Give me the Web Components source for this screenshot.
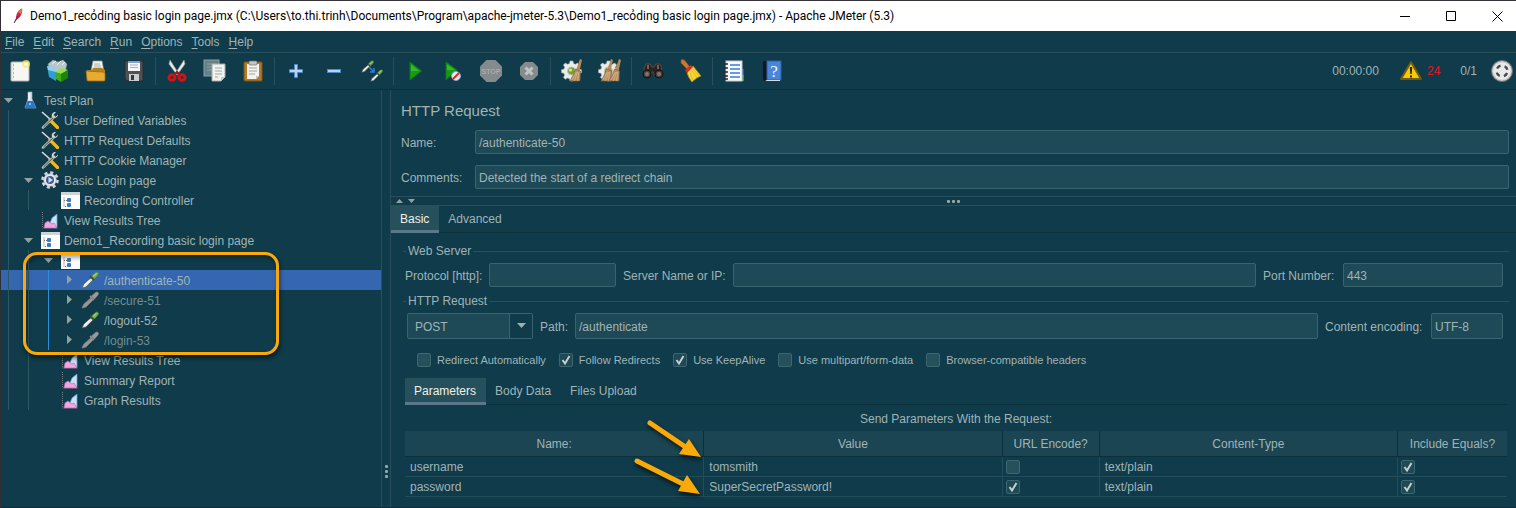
<!DOCTYPE html>
<html lang="en">
<head>
<meta charset="utf-8">
<title>Apache JMeter (5.3)</title>
<style>
:root{
  --bg:#0f3b4a; --field:#1e4956; --field-line:#3a646d; --line:#284f5b; --dark:#0b303c;
  --text:#a0b4b5; --bright:#eef0e4; --tab:#27505d; --accent:#59788a; --head:#1b4552; --mark:#f9aa0a;
}
html,body{margin:0;height:100%}
body{background:var(--bg);color:var(--text);font:12px/16px "Liberation Sans",Arial,sans-serif}
</style>
</head>
<body>
<jm-app></jm-app>
<script>
const define = (name, css, html, setup) => {
  const tpl = document.createElement('template');
  customElements.define(name, class extends HTMLElement {
    constructor(){
      super();
      this.attachShadow({mode:'open'});
    }
    connectedCallback(){
      if (this.shadowRoot.childNodes.length) return;
      tpl.innerHTML = `<style>*{box-sizing:border-box}${css}</style>` + (typeof html === 'function' ? html(this) : html);
      this.shadowRoot.append(tpl.content.cloneNode(true));
      if (setup) setup(this);
    }
  });
};

const dropper = (x, y, s, off) => `<g transform="translate(${x} ${y}) scale(${s})">
  <path d="M1 17 3 13 11 6l2 2-8 8z" fill="${off ? '#969696' : '#d9ddd8'}" stroke="${off ? '#8a8a8a' : '#53605e'}" stroke-width=".7"/>
  ${off ? '' : '<path d="M3 15 9 9" stroke="#fff" stroke-width="1.2"/>'}
  <path d="m9 5 4 4" stroke="${off ? '#8a8a8a' : '#3a4a3e'}" stroke-width="1.8"/>
  <path d="m10.500 5 4-3.500c2-1.500 4 .5 2.500 2.500L13.500 8z" fill="${off ? '#9a9a9a' : '#74b14e'}" stroke="${off ? '#888' : '#4c8238'}" stroke-width=".6"/>
  ${off ? '' : '<path d="m12 5.500 3.500-3" stroke="#b4e08c" stroke-width="1"/>'}</g>`;

const gear = `<g fill="#e9ece9" stroke="#aab1b0" stroke-width=".6"><path d="M9 1h3l.5 2.500 2 .8L16.600 3l2 2-1.300 2.200.8 2 2.400.5v3l-2.400.5-.8 2 1.300 2.100-2 2-2.100-1.300-2 .8L12 21H9l-.5-2.200-2-.8-2.100 1.300-2-2 1.300-2.100-.8-2L.5 12.700v-3l2.400-.5.8-2L2.400 5l2-2 2.100 1.300 2-.8z"/></g><circle cx="10.500" cy="11" r="4" fill="#7ba32c" stroke="#bcc3ba"/><circle cx="9.500" cy="10" r="1.500" fill="#d2eb8a"/>`;
const brush = x => `<g transform="translate(${x} 0)"><path d="M10 0 12 1 9.500 12 6 11z" fill="#b98a55"/><path d="m5.500 10 5 2-.5 10H0c2-4 4-7 5.500-12z" fill="#b38e63" stroke="#7c5a36" stroke-width=".6"/><path d="M2 21 6.500 13M4.500 22l3-9M7.500 22l1.300-9" stroke="#e0bf91" stroke-width=".7"/></g>`;

const ICONS = {
  feather:[10,16,`<path d="M1 15 3 10C3 6 6 1 9 .5 10 5 7 10 3.500 12z" fill="#c9234b"/><path d="M5.500 5C6 3 7 1 9 .5c.7 2-.3 4-1 5z" fill="#ec7a2f"/><path d="M1 15 5 8" stroke="#6b2a5e" stroke-width="1"/>`],
  new:[24,24,`<rect x="3" y="3" width="18" height="19" rx="1" fill="#f6f6f3" stroke="#b4b6b3"/><path d="M5 3v19" stroke="#ddd"/><path d="M5 6h1M5 10h1M5 14h1M5 18h1" stroke="#888"/><circle cx="18" cy="5" r="4" fill="#f4ea6c" opacity=".75"/><circle cx="18" cy="5" r="1.800" fill="#fffbe0"/>`],
  templates:[24,24,`<path d="M2 5 7 1l5 2 5-2 4 4-2 8H4z" fill="#b9c6ca" stroke="#7f9094" stroke-width=".6"/><path d="m6 5 4-3M11 6l4-4M16 6l3-3" stroke="#eef" stroke-width="1"/><path d="m1 7 9 3v12l-7-4z" fill="#2f9ed6"/><path d="M1 7 10 9v4L2 11z" fill="#8ed1f0"/><path d="m9 13 6 2v8l-5-3z" fill="#3cae16"/><path d="m9 13 7-4 6 2-7 4z" fill="#93e14c"/><path d="m15 15 7-4v8l-7 4z" fill="#1d8508"/>`],
  open:[24,24,`<path d="M7 12 9 2h9l2 11z" fill="#f5f5f2" stroke="#999" stroke-width=".7"/><path d="M10 5h6M10 7h7M9.500 9h8" stroke="#aaa"/><path d="M3 11h5l1-2h9l3 2v9H3z" fill="#b8801a"/><path d="m2 12 16 1c2 0 3 1 3 2v6c0 1-1 1-2 1H4c-1 0-1-1-1-1z" fill="#e6ab31" stroke="#9a6c17" stroke-width=".8"/>`],
  save:[24,24,`<path d="M3 2h18v20H5l-2-2z" fill="#4d5055" stroke="#282b2e"/><rect x="6" y="2" width="12" height="10" fill="#f4f6f8"/><rect x="6" y="2" width="12" height="2" fill="#7ca1cb"/><path d="M8 6h8M8 8.500h8" stroke="#9db2c6"/><rect x="7" y="15" width="10" height="7" fill="#c9ccce"/><rect x="9" y="16" width="3" height="5" fill="#34373b"/>`],
  cut:[24,24,`<path d="m5 1 9 14-2 1L4 5zM19 1l-9 14 2 1L20 5z" fill="#eceeec" stroke="#8e9391" stroke-width=".7"/><g fill="none" stroke="#d41414" stroke-width="3"><ellipse cx="7" cy="18.500" rx="3" ry="2.800"/><ellipse cx="17" cy="18.500" rx="3" ry="2.800"/></g><path d="m9 16 3-3 3 3" stroke="#b30d0d" stroke-width="2" fill="none"/>`],
  copy:[24,24,`<rect x="1" y="1" width="15" height="16" fill="#668087" stroke="#8ca1a5"/><path d="M4 5h9M4 8h9M4 11h9" stroke="#8fa3a6"/><path d="M9 5h13v13l-4 4H9z" fill="#f2f3f0" stroke="#a6aaa7"/><path d="M12 9h7M12 12h7M12 15h7M12 18h3" stroke="#a4a8a6"/><path d="M18 22v-4h4" fill="#c5c8c5"/>`],
  paste:[24,24,`<rect x="3" y="3" width="18" height="19" rx="1" fill="#b47a2c" stroke="#805215"/><path d="M6 5h12v12l-3 3H6z" fill="#f3f3ef"/><path d="M8 9h8M8 12h8M8 15h6" stroke="#a2a5a3"/><rect x="8" y="2" width="8" height="4" rx="1" fill="#c4c7c4" stroke="#6c706d" stroke-width=".7"/><path d="M15 20v-3h3" fill="#c6c6c0"/>`],
  plus:[24,24,`<path d="M10.500 5.500h3v5h5v3h-5v5h-3v-5h-5v-3h5z" fill="#b9d3f3" stroke="#4f88cf"/>`],
  minus:[24,24,`<rect x="5.500" y="10.500" width="13" height="3" fill="#b9d3f3" stroke="#4f88cf"/>`],
  toggle:[24,24,dropper(1,1,.72) + dropper(10,10,.72) + `<path d="m9 8 5 5M14 9v4h-4" fill="none" stroke="#2f7de0" stroke-width="1.500"/>`],
  start:[24,24,`<path d="M7 3 18.500 12 7 21z" fill="#169a1a" stroke="#0b7b13"/><path d="M8 5.500 16 12H8z" fill="#4cc23e" opacity=".7"/>`],
  nopause:[24,24,`<path d="M5 3 16 11 5 21z" fill="#169a1a" stroke="#0b7b13"/><path d="M6 5.500 14 11H6z" fill="#4cc23e" opacity=".7"/><circle cx="15" cy="17" r="4.500" fill="#e6eaf5" stroke="#8a9bc7"/><path d="m12 20 6-6" stroke="#d42c25" stroke-width="2"/>`],
  stop:[24,24,`<path d="M7.500 1h9L23 7.500v9L16.500 23h-9L1 16.500v-9z" fill="#858a8c"/><text x="12" y="15" text-anchor="middle" font-family="Liberation Sans" font-size="7" font-weight="700" fill="#a7abac">STOP</text>`],
  shutdown:[24,24,`<path d="M8 3h8l5 5v8l-5 5H8l-5-5V8z" fill="#858a8c"/><path d="m8.500 8.500 7 7m0-7-7 7" stroke="#c0c4c5" stroke-width="3"/>`],
  clear:[24,24,`<g transform="translate(1 1)">${gear}</g>${brush(10)}`],
  clearall:[24,24,`<g transform="translate(0 1)">${gear}</g>${brush(3)}${brush(11)}`],
  search:[24,24,`<path d="M3 9 5 5h4l2 3h2l2-3h4l2 4-3 7h-4l-2-3h-2l-2 3H4z" fill="#2b2422" stroke="#5b4a40"/><circle cx="6" cy="15" r="4" fill="#463e3a" stroke="#141110"/><circle cx="18" cy="15" r="4" fill="#463e3a" stroke="#141110"/><circle cx="6" cy="15" r="2" fill="#8b7466"/><circle cx="18" cy="15" r="2" fill="#8b7466"/><path d="M7 6v4M17 6v4" stroke="#b59b86"/>`],
  broom:[24,24,`<path d="M2 1c2-1 4 0 5 2l4 5-3 2-6-6z" fill="#c67a35" stroke="#8b4d1a" stroke-width=".7"/><path d="m8 13 6-6 8 10c-3 1-6 3-9 6-2-3-4-5-5-10z" fill="#f7d63c" stroke="#ae8718" stroke-width=".8"/><path d="m11 14 3 7M13 12l5 7M14 10l6 7" stroke="#d3a920" stroke-width=".7"/><path d="m6 11 5.500-5L14 8l-6 6z" fill="#d92b26"/>`],
  functions:[24,24,`<rect x="15" y="10" width="7" height="6" fill="#2d5fb3"/><rect x="15" y="16" width="7" height="6" fill="#3aa534"/><rect x="4" y="2" width="16" height="20" fill="#fafbfd" stroke="#c5ccd5"/><path d="M8 6h10M8 10h10M8 14h10M8 18h10" stroke="#3b7bdd" stroke-width="1.500"/><path d="M2 5h4M2 9h4M2 13h4M2 17h4M2 20h4" stroke="#252b31" stroke-width="1.300"/>`],
  help:[24,24,`<path d="M3 2h5v20H4l-1-2z" fill="#101820"/><rect x="7" y="2" width="14" height="19" fill="#4a86d8" stroke="#2b5ea9"/><path d="M5 22h15v-1H7" fill="#d8dde2"/><text x="14" y="18" text-anchor="middle" font-family="Liberation Serif" font-size="17" fill="#eef4ff">?</text>`],
  warn:[24,24,`<path d="M12 3 22 20H2z" fill="#f5ca00" stroke="#6d5c10" stroke-width="2" stroke-linejoin="round"/><path d="M10.800 8h2.400l-.5 7h-1.400zM11 16.500h2v2h-2z" fill="#2a2400"/>`],
  status:[24,24,`<circle cx="12" cy="12" r="10.500" fill="#c9c9c9" stroke="#6f7474"/><circle cx="12" cy="12" r="8.800" fill="#e9e9e9"/><circle cx="12" cy="12" r="5.500" fill="none" stroke="#454848" stroke-width="2.400" stroke-dasharray="4.320" stroke-dashoffset="-2.160"/>`],
  flask:[18,18,`<path d="M7 1h4v7l4 9H4l3-9z" fill="#d7e2ea" stroke="#93a9b5" stroke-width=".7"/><path d="M6.500 10h5.500l3 7H4z" fill="#2877d0"/><path d="M8 2v7" stroke="#fff" stroke-width="1.200"/><circle cx="9" cy="13" r="1" fill="#9fd1ff"/>`],
  tools:[18,18,`<path d="M1 1 10 9" stroke="#d6d8d6" stroke-width="1.600"/><path d="m9 9 7.500 7.500" stroke="#efbb1c" stroke-width="3.200" stroke-linecap="round"/><path d="M2 16.500 13 6" stroke="#aeb4b2" stroke-width="2.600" stroke-linecap="round"/><path d="m2.500 16 10.500-10" stroke="#2c3434" stroke-width=".7"/><path d="M17 3.500 14.500 6 12.500 4 15 1c-3-.5-5 2-4 5 2 2 6 1 6-2.500z" fill="#cfd3d1"/>`],
  gear:[18,18,`<circle cx="9" cy="9" r="7.300" fill="none" stroke="#d4d8da" stroke-width="3" stroke-dasharray="3 2.730"/><circle cx="9" cy="9" r="6.300" fill="#e6e8ea" stroke="#aab1b7" stroke-width=".6"/><circle cx="9" cy="9" r="4" fill="#3b5a92"/><path d="M7.500 6 12 9l-4.500 3z" fill="#cfe0fb"/>`],
  controller:[19,18,`<rect width="19" height="17" y="1" fill="#fbfcfc"/><rect y="1" width="19" height="3" fill="#cdd3d5"/><path d="M3 6.500v9h3M3 9.500h3" fill="none" stroke="#777" stroke-dasharray="1 1"/><rect x="6" y="7" width="4" height="4" rx="1" fill="#3b7ac0"/><rect x="6" y="12" width="4" height="4" rx="1" fill="#3b7ac0"/>`],
  report:[18,18,`<path d="M1.500 1v16H17" fill="none" stroke="#6d7d83" stroke-dasharray="1 1"/><path d="m9 12 2-5 5-4v13H9z" fill="#c7e1f7" stroke="#6f9fd0" stroke-width=".7"/><path d="m3 17 1-5 3-2 4 3 2-1 3 5z" fill="#f1a6e0" stroke="#c565b1" stroke-width=".7"/>`],
  sampler:[19,18,dropper(0,0,1)],
  sampleroff:[19,18,dropper(0,0,1,true)],
};

define('jm-icon', `:host{display:block;flex:none;line-height:0}svg{display:block}`, el => {
  const [w, h, body] = ICONS[el.getAttribute('name')];
  return `<svg width="${w}" height="${h}" viewBox="0 0 ${w} ${h}" fill="none" aria-hidden="true">${body}</svg>`;
});

define('jm-title-bar', `
  :host{display:flex;align-items:center;height:31px;padding:0 0 0 12px;gap:7px;background:#fff;color:#000;border-top:1px solid #35323a;font:12px/16px Roboto,"Open Sans",sans-serif}
  .t{flex:1;white-space:nowrap;overflow:hidden}
  button{width:46px;height:30px;padding:0;border:0;background:none;display:grid;place-items:center}
  nav{display:flex;margin-right:-4px}`,
  `<jm-icon name="feather"></jm-icon><span class="t"><slot></slot></span>
  <nav aria-label="Window">
  <button aria-label="Minimize"><svg width="11" height="11"><path d="M0 5.500h10" stroke="#000"/></svg></button>
  <button aria-label="Maximize"><svg width="11" height="11"><path d="M.5.5h9v9h-9z" fill="none" stroke="#000"/></svg></button>
  <button aria-label="Close"><svg width="11" height="11"><path d="m.5.5 10 10m0-10-10 10" stroke="#000"/></svg></button></nav>`);

define('jm-menu-bar', `
  :host{display:flex;height:22px;gap:9px;padding:0 4px;align-items:center;border-bottom:1px solid var(--line)}
  button{font:inherit;color:inherit;background:none;border:0;padding:0}
  u{text-underline-offset:2px}`,
  ['File','Edit','Search','Run','Options','Tools','Help'].map(n => `<button><u>${n[0]}</u>${n.slice(1)}</button>`).join(''));

const groups = [
  [['new','New'],['templates','Templates'],['open','Open'],['save','Save']],
  [['cut','Cut'],['copy','Copy'],['paste','Paste']],
  [['plus','Expand all'],['minus','Collapse all'],['toggle','Toggle']],
  [['start','Start'],['nopause','Start no pauses'],['stop','Stop'],['shutdown','Shutdown']],
  [['clear','Clear'],['clearall','Clear all']],
  [['search','Search'],['broom','Reset search']],
  [['functions','Function helper'],['help','Help']]];
define('jm-tool-bar', `
  :host{display:flex;align-items:center;height:37px;border-bottom:1px solid var(--dark)}
  .g{display:flex}
  .g+.g{margin-left:2px;border-left:1px solid var(--line);padding-left:2px}
  button{width:38px;height:28px;padding:0;border:0;background:none;display:grid;place-items:center}
  .s{margin-left:auto;display:flex;align-items:center;padding-right:2px}
  .s button{width:24px}
  time{margin-right:20px}.n{color:#e3161f;margin:0 20px 0 4px}.r{margin-right:13px}`,
  groups.map(g => `<div class="g">${g.map(([i,t]) => `<button aria-label="${t}"><jm-icon name="${i}"></jm-icon></button>`).join('')}</div>`).join('') +
  `<div class="s"><time>00:00:00</time><button aria-label="Log"><jm-icon name="warn"></jm-icon></button><span class="n">24</span><span class="r">0/1</span><jm-icon name="status"></jm-icon></div>`);

define('jm-tree-row', `
  :host{display:flex;height:20px;align-items:center;white-space:nowrap}
  :host([selected]){background:#3567b0}
  :host([off]){color:#738d91}
  i{width:20px;height:20px;flex:none;padding-left:7px}
  i::before{content:"";display:block;width:1px;height:20px;background:#315660}
  i.b::before{background:#2b8ddb}
  .t{width:20px;flex:none;display:grid;justify-items:start;padding-left:3px}
  .i{width:18px;margin-right:5px;flex:none}
  .l{padding-top:2px}`,
  el => [...(el.getAttribute('guides') || '')].map(c => `<i class="${c}"></i>`).join('') +
  `<span class="t">${{
    open:'<svg width="10" height="10"><path d="M0 3h9L4.500 8z" fill="#91a3a0"/></svg>',
    closed:'<svg width="10" height="10"><path d="M3 0v9l5-4.500z" fill="#91a3a0"/></svg>'}[el.getAttribute('state')] || ''}</span>
  <span class="i"><jm-icon name="${el.getAttribute('icon')}"></jm-icon></span><span class="l"><slot></slot></span>`,
  el => el.setAttribute('role', 'treeitem'));

define('jm-tree', `
  :host{display:block;position:relative;width:381px;flex:none;border-right:1px solid var(--line)}
  .mark{position:absolute;left:22px;top:162px;width:256px;height:103px;border:3px solid var(--mark);border-radius:14px;box-shadow:1px 3px 4px #0008,inset 1px 3px 4px #0005;pointer-events:none}`,
  `<div role="tree" aria-label="Test plan"><slot></slot></div><div class="mark"></div>`);

define('jm-grip', `
  :host{display:flex;align-items:center;justify-content:center;position:relative;flex:none}
  :host([vertical]){width:9px;border-right:1px solid var(--line);align-items:flex-end;padding-bottom:29px}
  :host(:not([vertical])){height:10px;border:solid var(--line);border-width:1px 0}
  .d{display:grid;gap:2px}
  :host(:not([vertical])) .d{grid-auto-flow:column}
  .d b{width:3px;height:3px;border-radius:1px;background:#93a7a4}
  .a{position:absolute;left:5px;top:1px}
  :host([vertical]) .a{display:none}`,
  `<svg class="a" width="22" height="6"><path d="M0 5h7L3.500 1zM12 1h7l-3.500 4z" fill="#91a3a0"/></svg><div class="d"><b></b><b></b><b></b></div>`);

const inputCss = `input,select{width:100%;height:var(--h,24px);display:block;margin:0;padding:1px 3px 0;font:inherit;color:inherit;background:var(--field);border:1px solid var(--field-line);border-radius:2px;outline:0}`;

define('jm-field', `
  :host{display:grid;grid-template-columns:var(--label,auto) 1fr;column-gap:7px;align-items:center}
  label{white-space:nowrap;padding-top:1px}input{min-width:0}${inputCss}`,
  el => `<label for="f">${el.getAttribute('label')}</label><input id="f" type="text" value="${el.getAttribute('value') || ''}">`);

define('jm-select', `
  :host{display:block;position:relative;width:126px;flex:none}${inputCss}
  select{appearance:none;padding:1px 7px 0}
  span{position:absolute;right:1px;top:1px;bottom:1px;width:23px;background:var(--bg);border-left:1px solid var(--field-line);display:grid;place-items:center;pointer-events:none}`,
  `<select aria-label="Method"><option>POST</option><option>GET</option></select><span><svg width="9" height="6"><path d="M0 0h9L4.500 5z" fill="#a0b0aa"/></svg></span>`);

define('jm-check', `
  :host{display:block;font-size:11px;line-height:14px}
  label{display:flex;gap:6px;align-items:center;white-space:nowrap}
  input{appearance:none;margin:0;width:14px;height:14px;flex:none;border:1px solid #3e666e;border-radius:2px;background:var(--tab)}
  input:checked{background:var(--field) url('data:image/svg+xml,<svg xmlns="http://www.w3.org/2000/svg" width="12" height="12"><path d="m2.500 6 2.500 3.500L9.500 2" fill="none" stroke="%23c4d0cd" stroke-width="2"/></svg>')}`,
  el => `<label><input type="checkbox" ${el.hasAttribute('checked') ? 'checked' : ''} ${el.hasAttribute('name') ? `aria-label="${el.getAttribute('name')}"` : ''}><slot></slot></label>`);

define('jm-tabs', `
  :host{display:flex;height:27px;background:linear-gradient(var(--dark),var(--dark)) 0 100%/100% 1px no-repeat}
  button{font:inherit;color:inherit;border:0;background:none;padding:2px 10px 0 9px;height:27px;border-bottom:3px solid transparent}
  button[aria-selected=true]{background:var(--tab);color:var(--bright);border-color:var(--accent)}`,
  el => el.getAttribute('items').split('|').map((t, i) => `<button role="tab" aria-selected="${i === 0}">${t}</button>`).join(''),
  el => el.setAttribute('role', 'tablist'));

define('jm-group', `
  :host{display:block}
  fieldset{margin:0;padding:4px 0 0;border:0;border-top:1px solid var(--line);min-width:0}
  legend{margin-left:3px;padding:0 2px;line-height:15px}
  .r{display:flex;gap:7px;padding:0 6px 0 var(--inset,2px)}`,
  el => `<fieldset><legend>${el.getAttribute('label')}</legend><div class="r"><slot></slot></div></fieldset>`);

define('jm-params', `
  :host{display:block}
  table{width:100%;table-layout:fixed;border-spacing:0;text-align:left}
  caption{line-height:26px;padding-top:1px;height:26px}
  th{height:26px;padding:0;background:var(--head);font-weight:400;text-align:center;border:solid var(--dark);border-width:0 0 1px 1px}
  td{height:20px;padding:0 5px;border:solid #244d59;border-width:0 0 1px 1px;position:relative}
  th:first-child,td:first-child{border-left:0}
  .u{width:97px}.e{width:110px}
  td:nth-child(3),td:nth-child(5){padding:0 3px}
  svg{position:absolute;left:-75px;top:-42px;z-index:1;overflow:visible;filter:drop-shadow(1px 3px 2px #0009);pointer-events:none}`,
  () => {
    const row = (n, v, u, extra = '') => `<tr><td>${n}</td><td>${v}${extra}</td><td><jm-check name="URL encode ${n}" ${u}></jm-check></td><td>text/plain</td><td><jm-check name="Include equals ${n}" checked></jm-check></td></tr>`;
    const arrows = `<svg width="80" height="85" fill="#f9aa0a"><path d="m21 8 37 25" stroke="#f9aa0a" stroke-width="5" stroke-linecap="round"/><path d="m72 42-22-3 10-15z"/><path d="m8 46 46 23" stroke="#f9aa0a" stroke-width="5" stroke-linecap="round"/><path d="M71 79 49 76l9-16z"/></svg>`;
    return `<table><caption>Send Parameters With the Request:</caption><thead><tr><th>Name:</th><th>Value</th><th class="u">URL Encode?</th><th>Content-Type</th><th class="e">Include Equals?</th></tr></thead>
    <tbody>${row('username','tomsmith','',arrows)}${row('password','SuperSecretPassword!','checked')}</tbody></table>`;
  });

define('jm-request', `
  :host{display:flex;flex-direction:column;flex:1;min-width:0}
  .h{padding:12px 7px 7px 10px;display:grid;gap:11px;--label:67px}
  h1{margin:0 0 -1px;font-size:15px;line-height:18px;font-weight:400}
  .f{padding:11px 7px 0 12px}
  .f>*+jm-group{margin-top:7px}
  .w{flex:1}.p{width:211px}.po{width:240px;--label:73px}.ce{width:178px;--label:99px}
  .t{--h:26px;--inset:4px}
  .c{display:flex;gap:13px;padding:14px 14px 11px}
  .x{padding:0 2px}`,
  `<div class="h"><h1>HTTP Request</h1><jm-field label="Name:" value="/authenticate-50"></jm-field><jm-field label="Comments:" value="Detected the start of a redirect chain"></jm-field></div>
  <jm-grip></jm-grip>
  <jm-tabs items="Basic|Advanced"></jm-tabs>
  <div class="f">
    <jm-group label="Web Server"><jm-field class="p" label="Protocol [http]:"></jm-field><jm-field class="w" label="Server Name or IP:"></jm-field><jm-field class="po" label="Port Number:" value="443"></jm-field></jm-group>
    <jm-group class="t" label="HTTP Request"><jm-select></jm-select><jm-field class="w" label="Path:" value="/authenticate"></jm-field><jm-field class="ce" label="Content encoding:" value="UTF-8"></jm-field></jm-group>
    <div class="c"><jm-check>Redirect Automatically</jm-check><jm-check checked>Follow Redirects</jm-check><jm-check checked>Use KeepAlive</jm-check><jm-check>Use multipart/form-data</jm-check><jm-check>Browser-compatible headers</jm-check></div>
    <div class="x"><jm-tabs items="Parameters|Body Data|Files Upload"></jm-tabs><jm-params></jm-params></div>
  </div>`);

define('jm-app', `
  :host{display:flex;flex-direction:column;min-height:100vh;border-left:1px solid #302f33;box-sizing:border-box}
  main{display:flex;flex:1;border-bottom:1px solid var(--dark)}`,
  `<jm-title-bar>Demo1_recỏding basic login page.jmx (C:\\Users\\to.thi.trinh\\Documents\\Program\\apache-jmeter-5.3\\Demo1_recỏding basic login page.jmx) - Apache JMeter (5.3)</jm-title-bar>
  <jm-menu-bar></jm-menu-bar>
  <jm-tool-bar></jm-tool-bar>
  <main>
    <jm-tree>
      <jm-tree-row state="open" icon="flask">Test Plan</jm-tree-row>
      <jm-tree-row guides="a" icon="tools">User Defined Variables</jm-tree-row>
      <jm-tree-row guides="a" icon="tools">HTTP Request Defaults</jm-tree-row>
      <jm-tree-row guides="a" icon="tools">HTTP Cookie Manager</jm-tree-row>
      <jm-tree-row guides="a" state="open" icon="gear">Basic Login page</jm-tree-row>
      <jm-tree-row guides="aa" icon="controller">Recording Controller</jm-tree-row>
      <jm-tree-row guides="a" icon="report">View Results Tree</jm-tree-row>
      <jm-tree-row guides="a" state="open" icon="controller">Demo1_Recording basic login page</jm-tree-row>
      <jm-tree-row guides="aa" state="open" icon="controller"></jm-tree-row>
      <jm-tree-row guides="aab" state="closed" icon="sampler" selected>/authenticate-50</jm-tree-row>
      <jm-tree-row guides="aab" state="closed" icon="sampleroff" off>/secure-51</jm-tree-row>
      <jm-tree-row guides="aab" state="closed" icon="sampler">/logout-52</jm-tree-row>
      <jm-tree-row guides="aab" state="closed" icon="sampleroff" off>/login-53</jm-tree-row>
      <jm-tree-row guides="aa" icon="report">View Results Tree</jm-tree-row>
      <jm-tree-row guides="aa" icon="report">Summary Report</jm-tree-row>
      <jm-tree-row guides="aa" icon="report">Graph Results</jm-tree-row>
    </jm-tree>
    <jm-grip vertical></jm-grip>
    <jm-request></jm-request>
  </main>`);
</script>
</body>
</html>
